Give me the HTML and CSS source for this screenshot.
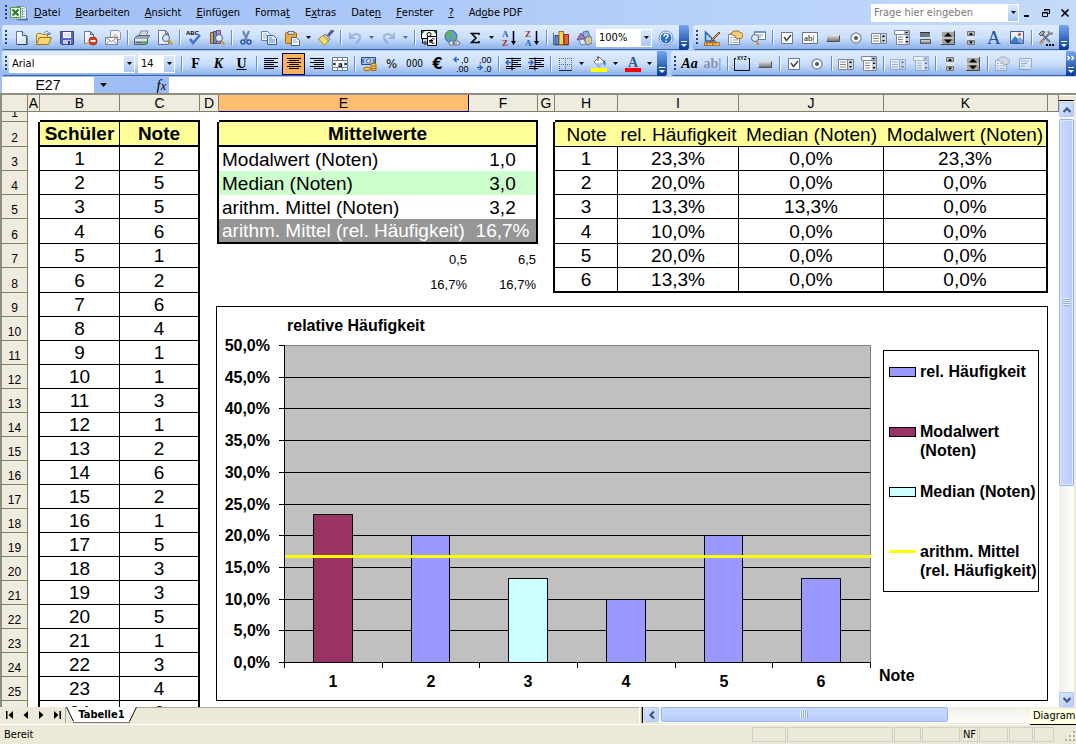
FILE: index.html
```html
<!DOCTYPE html>
<html lang="de">
<head>
<meta charset="utf-8">
<title>Tabelle1</title>
<link rel="stylesheet" href="styles.css">
</head>
<body>
<svg class="paints" aria-hidden="true">
<defs>
<linearGradient id="gbtn" x2="0" y2="1"><stop stop-color="#e8e8e8"/><stop offset="1" stop-color="#777"/></linearGradient>
<linearGradient id="gpage" x2="1" y2="1"><stop stop-color="#fff"/><stop offset="1" stop-color="#cfdcf2"/></linearGradient>
</defs>
</svg>
<svg class="sprite" aria-hidden="true">
<symbol id="caret" viewBox="0 0 5 3"><path d="M0 0h5L2.500 3z"/></symbol>
<symbol id="excel" viewBox="0 0 18 16"><path d="M6.500 1.500h8l2 2v11h-10z" fill="#fff" stroke="#6a8ab0"/><path d="M9 4h6M9 6.500h6M9 9h6M9 11.500h6M12.500 3v10" stroke="#86a5c8"/><path d="M.5 2.500h10v10H.5z" fill="#eef8e4" stroke="#5b9a3e"/><path d="M2.500 4.500l6 6M8.500 4.500l-6 6" stroke="#1f7a2e" stroke-width="2"/><path d="M8 13.500h10v2H8z" fill="#58789c"/></symbol>
<symbol id="new" viewBox="0 0 16 16"><path d="M3.500 1.500h6l4 4v9h-10z" fill="url(#gpage)" stroke="#5a76a8"/><path d="M9.500 1.500v4h4" fill="#dbe6f8" stroke="#3c5888"/><path d="M4 14.500h10V6" fill="none" stroke="#2d3f63"/></symbol>
<symbol id="open" viewBox="0 0 16 16"><path d="M.5 13.500v-9l1-1h4l1 1h5v3" fill="#f6dc8b" stroke="#a87e2a"/><path d="M.5 14.500l3-7h12l-3 7z" fill="#fbd56d" stroke="#a0721c"/><path d="M8 3c2-3 5-2 5 1m-2-1l2 2 2-2" fill="none" stroke="#4b79bd"/></symbol>
<symbol id="save" viewBox="0 0 16 16"><path d="M1.500 1.500h13v13h-12l-1-1z" fill="#5569c4" stroke="#39428f"/><path d="M4 2h8v6H4z" fill="#fff"/><path d="M5 4h6M5 6h6" stroke="#b9c5e6"/><path d="M4 10h8v4H4z" fill="#c7cbd8"/><path d="M9 11h2v3H9z" fill="#333f82"/></symbol>
<symbol id="perm" viewBox="0 0 16 16"><path d="M2.500 1.500h6l3 3v9h-9z" fill="url(#gpage)" stroke="#607aa8"/><path d="M8.500 1.500v3h3" fill="none" stroke="#435d8c"/><path d="M4 13h5" stroke="#e8b44a" stroke-width="2"/><circle cx="11" cy="11" r="4" fill="#d9401f" stroke="#a62d12"/><path d="M8.500 11h5" stroke="#fff" stroke-width="2"/></symbol>
<symbol id="mail" viewBox="0 0 16 16"><path d="M5.500.5h8l2 2v7h-10z" fill="#f7f9ff" stroke="#8b95ab"/><path d="M6 8l4-5 5 5" fill="#f4c2b0"/><path d="M.5 7.500h12v7H.5z" fill="#f6f7fa" stroke="#7a8296"/><path d="M.5 7.500l6 4 6-4M1 14.500l4-4m7 4l-4-4" fill="none" stroke="#8991a6"/></symbol>
<symbol id="print" viewBox="0 0 16 16"><path d="M5 6l2-5h7l-2 5z" fill="#fff" stroke="#6e7891"/><path d="M7 3h5M6 5h5" stroke="#9eb0d0"/><path d="M.5 8.500l3-3h12l-2 3v5l-2 1H.5z" fill="#9ea7b8" stroke="#525e76"/><path d="M1 9h12v2H1z" fill="#e3e7ef"/><path d="M9 11.500h4v2H9z" fill="#35c322"/><path d="M2 12.500h6" stroke="#56617b"/></symbol>
<symbol id="preview" viewBox="0 0 16 16"><path d="M1.500.5h7l3 3v11h-10z" fill="url(#gpage)" stroke="#5f7198"/><path d="M8.500.5v3h3" fill="none" stroke="#5f7198"/><circle cx="9" cy="8" r="3.500" fill="#cfe7f6" stroke="#55647f"/><path d="M11.500 10.500l3.500 4" stroke="#d79128" stroke-width="2.500"/></symbol>
<symbol id="spell" viewBox="0 0 16 16"><text x="0" y="5" class="t-abc">ABC</text><path d="M4 9l3 4 7-8" fill="none" stroke="#3f74c9" stroke-width="2.500"/></symbol>
<symbol id="research" viewBox="0 0 16 16"><path d="M1.500 2.500h3v11h-3z" fill="#d9a33c" stroke="#7c5b20"/><path d="M4.500 1.500h3v12h-3z" fill="#6689c9" stroke="#374c85"/><path d="M7.500.5h4v13h-4z" fill="#c287c7" stroke="#6c4c85"/><circle cx="10" cy="8" r="3.500" fill="#d9eefa" stroke="#506080"/><path d="M12.500 11l3 4" stroke="#d79128" stroke-width="2"/></symbol>
<symbol id="cut" viewBox="0 0 16 16"><path d="M5 1l4 9M11 1L7 10" stroke="#6c84ad" stroke-width="2"/><circle cx="5" cy="12" r="2" fill="none" stroke="#2c56a6" stroke-width="1.500"/><circle cx="11" cy="12" r="2" fill="none" stroke="#2c56a6" stroke-width="1.500"/></symbol>
<symbol id="copy" viewBox="0 0 16 16"><path d="M.5 1.500h6l3 3v6h-9z" fill="#fff" stroke="#5b7cb8"/><path d="M2 4h4M2 6h5M2 8h5" stroke="#89a9dc"/><path d="M6.500 5.500h6l3 3v6h-9z" fill="#eaf2ff" stroke="#335b9f"/><path d="M8 8h3M8 10h6M8 12h6" stroke="#5d87ca"/></symbol>
<symbol id="paste" viewBox="0 0 16 16"><rect x="1.500" y="2.500" width="11" height="11" rx="1" fill="#f2a93c" stroke="#9a6a20"/><path d="M4 1.500h6v3H4z" fill="#d9dce4" stroke="#6f727b"/><path d="M7.500 7.500h5l3 3v5h-8z" fill="#fff" stroke="#445c8d"/><path d="M9 10h3M9 12h5" stroke="#819dcc"/></symbol>
<symbol id="brush" viewBox="0 0 16 16"><path d="M15 0l-5 6" stroke="#675897" stroke-width="3"/><path d="M7 4l5 5-2 2-5-5z" fill="#c8c9d0" stroke="#70738a"/><path d="M5 5.500L.5 9l6 6.500 4-4.500z" fill="#f7dc71" stroke="#ab872c"/></symbol>
<symbol id="undo" viewBox="0 0 16 16"><path d="M3 3v5h5M3.500 7.500C8 2 14 4 13 8c-.5 3-3 4-4 5" fill="none" stroke="#6f8cc0" stroke-width="2"/></symbol>
<symbol id="redo" viewBox="0 0 16 16"><path d="M13 3v5H8M12.500 7.500C8 2 2 4 3 8c.5 3 3 4 4 5" fill="none" stroke="#6f8cc0" stroke-width="2"/></symbol>
<symbol id="euroconv" viewBox="0 0 16 16"><path d="M.5.5h15v8H.5z" fill="#fff" stroke="#000"/><path d="M1 1h3L1 4zM15 1v3l-3-3z" fill="#0a8a2e"/><circle cx="8" cy="4.500" r="2" fill="none" stroke="#000"/><path d="M6.500 6.500h9v9h-9z" fill="#fff" stroke="#000"/><path d="M13.500 9c-5-2-5 6 0 4M8 10.500h4M8 12h4" fill="none" stroke="#000"/><path d="M1.500 9v4h3m-1-2l2 2-2 2" fill="none" stroke="#000"/></symbol>
<symbol id="link" viewBox="0 0 16 16"><circle cx="7" cy="6.500" r="6" fill="#5e9be0" stroke="#3b659d"/><path d="M3 3c2-3 6-2 6 0s-3 1-3 4-3 1-4-1zM9 7c2-2 4-1 3 1s-2 3-3 2z" fill="#66b949"/><rect x="5" y="11" width="6" height="4" rx="2" fill="#e8edf6" stroke="#5f6a80"/><rect x="9.500" y="11" width="6" height="4" rx="2" fill="#e8edf6" stroke="#5f6a80"/><path d="M8 13h5" stroke="#5f6a80"/></symbol>
<symbol id="sum" viewBox="0 0 16 16"><path d="M12 5V3.500H4.500L9 8l-4.500 4.500H12V11" fill="none" stroke="#000" stroke-width="1.500"/></symbol>
<symbol id="sortaz" viewBox="0 0 16 16"><text x="1" y="7" class="t-sort blue">A</text><text x="1" y="16" class="t-sort red">Z</text><path d="M12.500 1v12" stroke="#000" stroke-width="1.500"/><path d="M10 11h5l-2.500 4z"/></symbol>
<symbol id="sortza" viewBox="0 0 16 16"><text x="1" y="7" class="t-sort red">Z</text><text x="1" y="16" class="t-sort blue">A</text><path d="M12.500 1v12" stroke="#000" stroke-width="1.500"/><path d="M10 11h5l-2.500 4z"/></symbol>
<symbol id="chart" viewBox="0 0 16 16"><path d="M.5 3v12h15" fill="none" stroke="#666"/><path d="M2 5.500h3.500v9H2z" fill="#5c8ee0" stroke="#27448e"/><path d="M6 1.500h4.500v13H6z" fill="#f8d45b" stroke="#9a6d14"/><path d="M11 4.500h4.500v10H11z" fill="#e5653b" stroke="#8e2d17"/></symbol>
<symbol id="draw" viewBox="0 0 16 16"><path d="M7 2l5-1 2 6-6 2z" fill="#8fb0ea" stroke="#4e6fb1"/><path d="M1 10l4-7 4 5z" fill="#ab7bc3" stroke="#6a4785"/><path d="M9 8l4-2 3 2v5l-4 2-3-2z" fill="#cfc6a2" stroke="#796f57"/><path d="M3 10l5-1 2 5-5 1z" fill="#dbe6fa" stroke="#6d81ab"/></symbol>
<symbol id="help" viewBox="0 0 16 16"><circle cx="8" cy="8" r="7" fill="#fff" stroke="#6b8fd0"/><circle cx="8" cy="8" r="5.500" fill="#2e6cd0"/><path d="M6 6.500c0-3 4-3 4-.5 0 1.500-2 1.500-2 3M8 10.500V12" fill="none" stroke="#fff" stroke-width="1.500"/></symbol>
<symbol id="design" viewBox="0 0 16 16"><path d="M1.500 2v9h9z" fill="#b9d3f5" stroke="#2b60b8" stroke-width="1.500"/><path d="M15 2l-8 8-1 2 2-1 8-8z" fill="#f3a245" stroke="#7b4d1d"/><path d="M.5 12.500h15v3H.5z" fill="#f6c45b" stroke="#a4732a"/><path d="M3 13v2M6 13v1M9 13v2M12 13v1" stroke="#7a5113"/></symbol>
<symbol id="props" viewBox="0 0 16 16"><path d="M1.500 4.500h11v10h-11z" fill="#fff" stroke="#77839e"/><path d="M3 7.500h2M6 7.500h5M3 10h2M6 10h5M3 12.500h2M6 12.500h5" stroke="#8d9ec1"/><path d="M3 4l4-3h4l5 3-1 4-5 1-2-3z" fill="#f5cf73" stroke="#9c762c"/></symbol>
<symbol id="code" viewBox="0 0 16 16"><path d="M4.500 1.500h11v8h-11z" fill="#fff" stroke="#6079a9"/><path d="M5 2h10" stroke="#6d94d8" stroke-width="2"/><path d="M7 5h6M7 7h4" stroke="#8294b6"/><circle cx="5" cy="8" r="3.500" fill="#d9edf9" stroke="#5d6b86"/><path d="M6.500 11l2 4" stroke="#c98f46" stroke-width="2"/></symbol>
<symbol id="check" viewBox="0 0 16 16"><path d="M2.500 2.500h11v11h-11z" fill="#fff" stroke="#6c788f"/><path d="M5 7l2.500 3.500L12 5" fill="none" stroke="#444" stroke-width="1.500"/></symbol>
<symbol id="textbox" viewBox="0 0 16 16"><path d="M.5 2.500h15v11H.5z" fill="#fff" stroke="#6c7484"/><text x="2" y="11" class="t-ab">ab|</text></symbol>
<symbol id="cmd" viewBox="0 0 16 16"><path d="M2 5h12v6H2z" fill="url(#gbtn)"/><path d="M1.500 11.500h13v-6" fill="none" stroke="#4b4f58"/></symbol>
<symbol id="radio" viewBox="0 0 16 16"><circle cx="8" cy="8" r="5" fill="#fff" stroke="#8a94a6" stroke-width="1.500"/><circle cx="8" cy="8" r="2" fill="#4c5568"/></symbol>
<symbol id="list" viewBox="0 0 16 16"><path d="M.5 3.500h15v10H.5z" fill="#fff" stroke="#7d8699"/><path d="M9.500 3.500v10" stroke="#7d8699"/><path d="M2 6h6M2 8.500h6M2 11h6" stroke="#888"/><path d="M10 4h5v9h-5z" fill="#c9d1de"/><path d="M11 7h3l-1.500-2zM11 10h3l-1.500 2z"/></symbol>
<symbol id="combo" viewBox="0 0 16 16"><path d="M.5.5h15v4H.5z" fill="#fff" stroke="#7d8699"/><path d="M10 1h5v3h-5z" fill="#aebedb"/><path d="M11 2h3l-1.500 1.500z"/><path d="M2.500 4.500h13v10h-13z" fill="#fff" stroke="#7d8699"/><path d="M4 7h5M4 9.500h5M4 12h5" stroke="#888"/><path d="M11 5h4v9h-4z" fill="#c9d1de"/><path d="M11.500 8h3L13 6zM11.500 11h3L13 13z"/></symbol>
<symbol id="toggle" viewBox="0 0 16 16"><path d="M3 2h10v5H3z" fill="#70757e"/><path d="M3 2.500h10" stroke="#33373e"/><path d="M3.500 9.500h10v4h-10z" fill="url(#gbtn)" stroke="#555"/></symbol>
<symbol id="spin" viewBox="0 0 16 16"><path d="M1 1h14v14H1z" fill="#a5a59f"/><path d="M1 1.500h14M1 8h14M1.500 1v14" stroke="#ddd"/><path d="M14.500 1v13.500H1" fill="none" stroke="#444"/><path d="M4 6.500h8L8 2.500zM4 9.500h8l-4 4z"/></symbol>
<symbol id="scroll" viewBox="0 0 16 16"><path d="M4 1h8v14H4z" fill="#dde3ed"/><path d="M4.500 1.500h7v4h-7zM4.500 10.500h7v4h-7z" fill="#b5b5b5" stroke="#777"/><path d="M6 5h4L8 2.500zM6 11.500h4L8 14z"/></symbol>
<symbol id="label" viewBox="0 0 16 16"><text x="1" y="14" class="t-A">A</text></symbol>
<symbol id="image" viewBox="0 0 16 16"><path d="M1.500 1.500h13v12h-13z" fill="#eaf3ff" stroke="#425b90"/><path d="M2 11l4-5 8 7H2z" fill="#4376c5"/><circle cx="10.500" cy="4.500" r="1.800" fill="#dd6240"/><path d="M8 10l3-3 3 3v3h-3z" fill="#7fa5e2"/></symbol>
<symbol id="tools" viewBox="0 0 16 16"><path d="M2 13L12 3M3 3l9 9" stroke="#6f7780" stroke-width="2"/><path d="M1 4l3-3 3 1-4 4z" fill="#a4abb5" stroke="#555"/><path d="M10 1l2 3 3-1" fill="none" stroke="#888" stroke-width="2"/><path d="M2 14l4-4" stroke="#c99f5c" stroke-width="2"/><path d="M8 14h2v2H8zM11 14h2v2h-2zM14 14h2v2h-2z"/></symbol>
<symbol id="left" viewBox="0 0 16 16"><path d="M1 2.500h14M1 4.500h10M1 6.500h14M1 8.500h10M1 10.500h14M1 12.500h10" stroke="#000"/></symbol>
<symbol id="center" viewBox="0 0 16 16"><path d="M1 2.500h14M3 4.500h10M1 6.500h14M3 8.500h10M1 10.500h14M3 12.500h10" stroke="#000"/></symbol>
<symbol id="right" viewBox="0 0 16 16"><path d="M1 2.500h14M5 4.500h10M1 6.500h14M5 8.500h10M1 10.500h14M5 12.500h10" stroke="#000"/></symbol>
<symbol id="merge" viewBox="0 0 16 16"><path d="M.5 1.500h15v13H.5zM.5 4.500h15M.5 11.500h15M5.500 1.500v3M10.500 1.500v3M5.500 11.500v3M10.500 11.500v3" fill="#fff" stroke="#6b7c9b"/><text x="6" y="11" class="t-ab bold">a</text><path d="M1 8h3M3 6.500L1.500 8 3 9.500M15 8h-3M13 6.500L14.500 8 13 9.500" fill="none" stroke="#000"/></symbol>
<symbol id="currency" viewBox="0 0 16 16"><path d="M.5 1.500h14v7H.5z" fill="#a9c3ec" stroke="#27509c"/><circle cx="7.500" cy="5" r="2" fill="#eef" stroke="#3a63b0"/><path d="M2 3v4M13 3v4" stroke="#3a63b0" stroke-width="1.500"/><path d="M10 7.500h5v7h-5z" fill="#f5c251" stroke="#a56d12"/><path d="M10 10h5M10 12.500h5" stroke="#a56d12"/><ellipse cx="6" cy="13" rx="3.500" ry="1.800" fill="#f5c251" stroke="#a56d12"/></symbol>
<symbol id="decin" viewBox="0 0 16 16"><text x="8" y="7" class="t-num">,0</text><text x="3" y="16" class="t-num">,00</text><path d="M6 3.500H1M3.500 1L1 3.500 3.500 6" fill="none" stroke="#2e65bd" stroke-width="1.500"/></symbol>
<symbol id="decout" viewBox="0 0 16 16"><text x="3" y="7" class="t-num">,00</text><text x="8" y="16" class="t-num">,0</text><path d="M1 11.500h5M3.500 9L6 11.500 3.500 14" fill="none" stroke="#2e65bd" stroke-width="1.500"/></symbol>
<symbol id="outdent" viewBox="0 0 16 16"><path d="M1 2.500h15M7 4.500h9M7 6.500h6M7 8.500h9M1 10.500h15M1 12.500h9M7 1.500v13" stroke="#000"/><path d="M6 6.500H1M3.500 4L1 6.500 3.500 9" fill="none" stroke="#2e65bd" stroke-width="1.500"/></symbol>
<symbol id="indent" viewBox="0 0 16 16"><path d="M1 2.500h15M7 4.500h9M7 6.500h6M7 8.500h9M1 10.500h15M1 12.500h9M7 1.500v13" stroke="#000"/><path d="M0 6.500h5M2.500 4L5 6.500 2.500 9" fill="none" stroke="#2e65bd" stroke-width="1.500"/></symbol>
<symbol id="borders" viewBox="0 0 16 16"><path d="M2.500 2v12M8.500 2v12M14.500 2v12M2 2.500h13M2 8.500h13" stroke="#556685" stroke-dasharray="1 1"/><path d="M2 14.500h13" stroke="#223"/></symbol>
<symbol id="fill" viewBox="0 0 16 16"><path d="M3 6l5-5 5 5-5 5z" fill="#fff" stroke="#596987"/><path d="M4 7h9l-5 4z" fill="#a8c4ec"/><path d="M7 0v5" stroke="#445"/><path d="M12 4c3 0 3 4 2 6-2-1-1-4-2-6z" fill="#3471c8"/><path d="M0 12h16v4H0z" fill="#ff0"/></symbol>
<symbol id="fontcol" viewBox="0 0 16 16"><text x="3" y="11" class="t-Ac">A</text><path d="M0 12h16v4H0z" fill="red"/></symbol>
<symbol id="group" viewBox="0 0 16 16"><text x="3" y="4" class="t-xyz">XYZ</text><path d="M2 2.500H.5v12h15v-12H14" fill="none" stroke="#111"/></symbol>
<symbol id="doc" viewBox="0 0 16 16"><path d="M2.500 2.500h12v9l-2 2h-10z" fill="#eef3fc" stroke="#5f739a"/><path d="M4 5h8M4 7.500h6M4 10h4" stroke="#6d80a6"/></symbol>
<symbol id="min" viewBox="0 0 10 10"><path d="M2 8h5" stroke="#000" stroke-width="2"/></symbol>
<symbol id="restore" viewBox="0 0 10 10"><path d="M3.500 3V1.500h5v4H7M1.500 4.500h5v4h-5zM3 2h6M1 5h6" fill="none" stroke="#000"/></symbol>
<symbol id="close" viewBox="0 0 10 10"><path d="M1.500 1.500l7 7M8.500 1.500l-7 7" stroke="#000" stroke-width="1.700"/></symbol>
<symbol id="cap" viewBox="0 0 10 25"><path d="M2 16.500h6" stroke="#fff"/><path d="M2 19h6l-3 3z" fill="#fff"/></symbol>
<symbol id="capmore" viewBox="0 0 10 25"><path d="M1.500 5l2 2-2 2M5.500 5l2 2-2 2" fill="none" stroke="#fff" stroke-width="1.500"/><path d="M2 16.500h6" stroke="#fff"/><path d="M2 19h6l-3 3z" fill="#fff"/></symbol>
<symbol id="first" viewBox="0 0 10 8"><path d="M1 0h1.500v8H1zM8 0v8L3.500 4z"/></symbol>
<symbol id="prev" viewBox="0 0 10 8"><path d="M7 0v8L2.500 4z"/></symbol>
<symbol id="next" viewBox="0 0 10 8"><path d="M3 0v8l4.500-4z"/></symbol>
<symbol id="last" viewBox="0 0 10 8"><path d="M7.500 0H9v8H7.500zM2 0v8l4.500-4z"/></symbol>
<symbol id="up" viewBox="0 0 10 10"><path d="M1.500 7L5 3.500 8.500 7" fill="none" stroke="#3f5784" stroke-width="2.200"/></symbol>
<symbol id="down" viewBox="0 0 10 10"><path d="M1.500 3L5 6.500 8.500 3" fill="none" stroke="#3f5784" stroke-width="2.200"/></symbol>
<symbol id="back" viewBox="0 0 10 10"><path d="M7 1.500L3.500 5 7 8.500" fill="none" stroke="#3f5784" stroke-width="2.200"/></symbol>
</svg>

<header class="menubar">
  <span class="grip"></span>
  <svg class="appicon"><use href="#excel"/></svg>
  <nav class="menus">
    <button><u>D</u>atei</button><button><u>B</u>earbeiten</button><button><u>A</u>nsicht</button><button><u>E</u>infügen</button><button>Forma<u>t</u></button><button>E<u>x</u>tras</button><button>Date<u>n</u></button><button><u>F</u>enster</button><button><u>?</u></button><button>Ad<u>o</u>be PDF</button>
  </nav>
  <div class="field ask"><input type="text" placeholder="Frage hier eingeben" aria-label="Frage"><span class="drop"><svg class="caret"><use href="#caret"/></svg></span></div>
  <div class="winbtns">
    <button aria-label="Minimieren"><svg><use href="#min"/></svg></button>
    <button aria-label="Wiederherstellen"><svg><use href="#restore"/></svg></button>
    <button aria-label="Schließen"><svg><use href="#close"/></svg></button>
  </div>
</header>

<div class="toolrow">
  <div class="toolbar">
    <span class="grip"></span>
    <button class="tb" aria-label="Neu"><svg><use href="#new"/></svg></button>
    <button class="tb" aria-label="Öffnen"><svg><use href="#open"/></svg></button>
    <button class="tb" aria-label="Speichern"><svg><use href="#save"/></svg></button>
    <button class="tb" aria-label="Berechtigung"><svg><use href="#perm"/></svg></button>
    <button class="tb" aria-label="E-Mail"><svg><use href="#mail"/></svg></button>
    <span class="sep"></span>
    <button class="tb" aria-label="Drucken"><svg><use href="#print"/></svg></button>
    <button class="tb" aria-label="Seitenansicht"><svg><use href="#preview"/></svg></button>
    <span class="sep"></span>
    <button class="tb" aria-label="Rechtschreibung"><svg><use href="#spell"/></svg></button>
    <button class="tb" aria-label="Recherchieren"><svg><use href="#research"/></svg></button>
    <span class="sep"></span>
    <button class="tb" aria-label="Ausschneiden"><svg><use href="#cut"/></svg></button>
    <button class="tb" aria-label="Kopieren"><svg><use href="#copy"/></svg></button>
    <button class="tb" aria-label="Einfügen"><svg><use href="#paste"/></svg></button>
    <button class="more" aria-label="Einfügeoptionen"><svg class="caret"><use href="#caret"/></svg></button>
    <button class="tb" aria-label="Format übertragen"><svg><use href="#brush"/></svg></button>
    <span class="sep"></span>
    <button class="tb dim" aria-label="Rückgängig"><svg><use href="#undo"/></svg></button>
    <button class="more dim" aria-label="Rückgängig-Liste"><svg class="caret"><use href="#caret"/></svg></button>
    <button class="tb dim" aria-label="Wiederholen"><svg><use href="#redo"/></svg></button>
    <button class="more dim" aria-label="Wiederholen-Liste"><svg class="caret"><use href="#caret"/></svg></button>
    <span class="sep"></span>
    <button class="tb" aria-label="Eurokonvertierung"><svg><use href="#euroconv"/></svg></button>
    <button class="tb" aria-label="Hyperlink"><svg><use href="#link"/></svg></button>
    <button class="tb" aria-label="AutoSumme"><svg><use href="#sum"/></svg></button>
    <button class="more" aria-label="Funktionen"><svg class="caret"><use href="#caret"/></svg></button>
    <button class="tb" aria-label="Aufsteigend sortieren"><svg><use href="#sortaz"/></svg></button>
    <button class="tb" aria-label="Absteigend sortieren"><svg><use href="#sortza"/></svg></button>
    <span class="sep"></span>
    <button class="tb" aria-label="Diagramm-Assistent"><svg><use href="#chart"/></svg></button>
    <button class="tb" aria-label="Zeichnen"><svg><use href="#draw"/></svg></button>
    <div class="field zoom"><select aria-label="Zoom"><option>100%</option></select><span class="drop"><svg class="caret"><use href="#caret"/></svg></span></div>
    <button class="tb" aria-label="Hilfe"><svg><use href="#help"/></svg></button>
    <button class="cap" aria-label="Optionen Standard"><svg><use href="#cap"/></svg></button>
  </div>
  <div class="toolbar">
    <span class="grip"></span>
    <button class="tb" aria-label="Entwurfsmodus"><svg><use href="#design"/></svg></button>
    <button class="tb" aria-label="Eigenschaften"><svg><use href="#props"/></svg></button>
    <button class="tb" aria-label="Code anzeigen"><svg><use href="#code"/></svg></button>
    <span class="sep"></span>
    <button class="tb" aria-label="Kontrollkästchen"><svg><use href="#check"/></svg></button>
    <button class="tb" aria-label="Textfeld"><svg><use href="#textbox"/></svg></button>
    <button class="tb" aria-label="Befehlsschaltfläche"><svg><use href="#cmd"/></svg></button>
    <button class="tb" aria-label="Optionsfeld"><svg><use href="#radio"/></svg></button>
    <button class="tb" aria-label="Listenfeld"><svg><use href="#list"/></svg></button>
    <button class="tb" aria-label="Kombinationsfeld"><svg><use href="#combo"/></svg></button>
    <button class="tb" aria-label="Umschaltfläche"><svg><use href="#toggle"/></svg></button>
    <button class="tb" aria-label="Drehfeld"><svg><use href="#spin"/></svg></button>
    <button class="tb" aria-label="Bildlaufleiste"><svg><use href="#scroll"/></svg></button>
    <button class="tb" aria-label="Bezeichnung"><svg><use href="#label"/></svg></button>
    <button class="tb" aria-label="Bild"><svg><use href="#image"/></svg></button>
    <span class="sep"></span>
    <button class="tb" aria-label="Weitere Steuerelemente"><svg><use href="#tools"/></svg></button>
    <button class="cap" aria-label="Optionen Steuerelemente"><svg><use href="#cap"/></svg></button>
  </div>
</div>

<div class="toolrow">
  <div class="toolbar">
    <span class="grip"></span>
    <div class="field font"><select aria-label="Schriftart"><option>Arial</option></select><span class="drop"><svg class="caret"><use href="#caret"/></svg></span></div>
    <div class="field size"><select aria-label="Schriftgrad"><option>14</option></select><span class="drop"><svg class="caret"><use href="#caret"/></svg></span></div>
    <span class="sep"></span>
    <button class="tb letter">F</button>
    <button class="tb letter"><i>K</i></button>
    <button class="tb letter"><u>U</u></button>
    <span class="sep"></span>
    <button class="tb" aria-label="Linksbündig"><svg><use href="#left"/></svg></button>
    <button class="tb on" aria-label="Zentriert"><svg><use href="#center"/></svg></button>
    <button class="tb" aria-label="Rechtsbündig"><svg><use href="#right"/></svg></button>
    <button class="tb" aria-label="Verbinden und zentrieren"><svg><use href="#merge"/></svg></button>
    <span class="sep"></span>
    <button class="tb" aria-label="Währung"><svg><use href="#currency"/></svg></button>
    <button class="tb glyph">%</button>
    <button class="tb glyph small">000</button>
    <button class="tb glyph bold">€</button>
    <button class="tb" aria-label="Dezimalstelle hinzufügen"><svg><use href="#decin"/></svg></button>
    <button class="tb" aria-label="Dezimalstelle löschen"><svg><use href="#decout"/></svg></button>
    <span class="sep"></span>
    <button class="tb" aria-label="Einzug verkleinern"><svg><use href="#outdent"/></svg></button>
    <button class="tb" aria-label="Einzug vergrößern"><svg><use href="#indent"/></svg></button>
    <span class="sep"></span>
    <button class="tb" aria-label="Rahmen"><svg><use href="#borders"/></svg></button>
    <button class="more" aria-label="Rahmenliste"><svg class="caret"><use href="#caret"/></svg></button>
    <button class="tb" aria-label="Füllfarbe"><svg><use href="#fill"/></svg></button>
    <button class="more" aria-label="Füllfarben"><svg class="caret"><use href="#caret"/></svg></button>
    <button class="tb" aria-label="Schriftfarbe"><svg><use href="#fontcol"/></svg></button>
    <button class="more" aria-label="Schriftfarben"><svg class="caret"><use href="#caret"/></svg></button>
    <button class="cap" aria-label="Optionen Format"><svg><use href="#cap"/></svg></button>
  </div>
  <div class="toolbar grow">
    <span class="grip"></span>
    <button class="tb letter"><i>Aa</i></button>
    <button class="tb letter pale">ab|</button>
    <span class="sep"></span>
    <button class="tb" aria-label="Gruppenfeld"><svg><use href="#group"/></svg></button>
    <button class="tb" aria-label="Schaltfläche"><svg><use href="#cmd"/></svg></button>
    <span class="sep"></span>
    <button class="tb" aria-label="Kästchen"><svg><use href="#check"/></svg></button>
    <button class="tb" aria-label="Option"><svg><use href="#radio"/></svg></button>
    <span class="sep"></span>
    <button class="tb" aria-label="Liste"><svg><use href="#list"/></svg></button>
    <button class="tb" aria-label="Kombination"><svg><use href="#combo"/></svg></button>
    <span class="sep"></span>
    <button class="tb dim" aria-label="Liste bearbeiten"><svg><use href="#list"/></svg></button>
    <button class="tb dim" aria-label="Kombination bearbeiten"><svg><use href="#combo"/></svg></button>
    <span class="sep"></span>
    <button class="tb" aria-label="Laufleiste"><svg><use href="#scroll"/></svg></button>
    <button class="tb" aria-label="Drehen"><svg><use href="#spin"/></svg></button>
    <span class="sep"></span>
    <button class="tb dim gray-icon" aria-label="Steuerelement-Eigenschaften"><svg><use href="#props"/></svg></button>
    <button class="tb dim" aria-label="Code bearbeiten"><svg><use href="#doc"/></svg></button>
    <button class="cap" aria-label="Optionen Formular"><svg><use href="#capmore"/></svg></button>
  </div>
</div>

<div class="formulabar">
  <input class="namebox" type="text" value="E27" aria-label="Namenfeld">
  <button class="namedrop" aria-label="Namen"><svg class="caret big"><use href="#caret"/></svg></button>
  <button class="fx"><i>f<small>x</small></i></button>
  <input class="formula" type="text" aria-label="Formel">
</div>

<main class="workarea">
  <div class="sheet">
    <table class="cells">
      <colgroup><col class="w-row"><col class="w-a"><col class="w-b"><col class="w-b"><col class="w-d"><col class="w-e"><col class="w-f"><col class="w-g"><col class="w-h"><col class="w-i"><col class="w-j"><col class="w-k"><col></colgroup>
      <thead><tr><th></th><th>A</th><th>B</th><th>C</th><th>D</th><th class="sel">E</th><th>F</th><th>G</th><th>H</th><th>I</th><th>J</th><th>K</th><th></th></tr></thead>
      <tbody>
      <tr class="r1"><th><span class="clip">1</span></th><td></td><td class="bb"></td><td class="bb"></td><td></td><td class="bb"></td><td class="bb"></td><td></td><td class="bb"></td><td class="bb"></td><td class="bb"></td><td class="bb"></td><td></td></tr>
      <tr class="tall"><th>2</th><td class="br"></td><td class="hd r bb">Schüler</td><td class="hd bb br">Note</td><td class="br"></td><td class="hd bb br" colspan="2">Mittelwerte</td><td class="br"></td><td class="hy b">Note</td><td class="hy b">rel. Häufigkeit</td><td class="hy b">Median (Noten)</td><td class="hy b br">Modalwert (Noten)</td><td></td></tr>
      <tr><th>3</th><td class="br"></td><td class="g">1</td><td class="g br">2</td><td class="br"></td><td class="lt">Modalwert (Noten)</td><td class="br">1,0</td><td class="br"></td><td class="g">1</td><td class="g">23,3%</td><td class="g">0,0%</td><td class="g br">23,3%</td><td></td></tr>
      <tr><th>4</th><td class="br"></td><td class="g">2</td><td class="g br">5</td><td class="br"></td><td class="lt green">Median (Noten)</td><td class="br green">3,0</td><td class="br"></td><td class="g">2</td><td class="g">20,0%</td><td class="g">0,0%</td><td class="g br">0,0%</td><td></td></tr>
      <tr><th>5</th><td class="br"></td><td class="g">3</td><td class="g br">5</td><td class="br"></td><td class="lt">arithm. Mittel (Noten)</td><td class="br">3,2</td><td class="br"></td><td class="g">3</td><td class="g">13,3%</td><td class="g">13,3%</td><td class="g br">0,0%</td><td></td></tr>
      <tr class="tall"><th>6</th><td class="br"></td><td class="g">4</td><td class="g br">6</td><td class="br"></td><td class="lt gray bb">arithm. Mittel (rel. Häufigkeit)</td><td class="br gray bb">16,7%</td><td class="br"></td><td class="g">4</td><td class="g">10,0%</td><td class="g">0,0%</td><td class="g br">0,0%</td><td></td></tr>
      <tr><th>7</th><td class="br"></td><td class="g">5</td><td class="g br">1</td><td></td><td class="sm">0,5</td><td class="sm">6,5</td><td class="br"></td><td class="g">5</td><td class="g">20,0%</td><td class="g">0,0%</td><td class="g br">0,0%</td><td></td></tr>
      <tr class="tall"><th>8</th><td class="br"></td><td class="g">6</td><td class="g br">2</td><td></td><td class="sm">16,7%</td><td class="sm">16,7%</td><td class="br"></td><td class="g bb">6</td><td class="g bb">13,3%</td><td class="g bb">0,0%</td><td class="g bb br">0,0%</td><td></td></tr>
      <tr><th>9</th><td class="br"></td><td class="g">7</td><td class="g br">6</td><td colspan="9"></td></tr>
      <tr><th>10</th><td class="br"></td><td class="g">8</td><td class="g br">4</td><td colspan="9"></td></tr>
      <tr><th>11</th><td class="br"></td><td class="g">9</td><td class="g br">1</td><td colspan="9"></td></tr>
      <tr><th>12</th><td class="br"></td><td class="g">10</td><td class="g br">1</td><td colspan="9"></td></tr>
      <tr><th>13</th><td class="br"></td><td class="g">11</td><td class="g br">3</td><td colspan="9"></td></tr>
      <tr><th>14</th><td class="br"></td><td class="g">12</td><td class="g br">1</td><td colspan="9"></td></tr>
      <tr><th>15</th><td class="br"></td><td class="g">13</td><td class="g br">2</td><td colspan="9"></td></tr>
      <tr><th>16</th><td class="br"></td><td class="g">14</td><td class="g br">6</td><td colspan="9"></td></tr>
      <tr><th>17</th><td class="br"></td><td class="g">15</td><td class="g br">2</td><td colspan="9"></td></tr>
      <tr><th>18</th><td class="br"></td><td class="g">16</td><td class="g br">1</td><td colspan="9"></td></tr>
      <tr><th>19</th><td class="br"></td><td class="g">17</td><td class="g br">5</td><td colspan="9"></td></tr>
      <tr><th>20</th><td class="br"></td><td class="g">18</td><td class="g br">3</td><td colspan="9"></td></tr>
      <tr><th>21</th><td class="br"></td><td class="g">19</td><td class="g br">3</td><td colspan="9"></td></tr>
      <tr><th>22</th><td class="br"></td><td class="g">20</td><td class="g br">5</td><td colspan="9"></td></tr>
      <tr><th>23</th><td class="br"></td><td class="g">21</td><td class="g br">1</td><td colspan="9"></td></tr>
      <tr><th>24</th><td class="br"></td><td class="g">22</td><td class="g br">3</td><td colspan="9"></td></tr>
      <tr><th>25</th><td class="br"></td><td class="g">23</td><td class="g br">4</td><td colspan="9"></td></tr>
      <tr><th></th><td class="br"></td><td class="g">24</td><td class="g br">6</td><td colspan="9"></td></tr>
      </tbody>
    </table>

    <section class="chart" aria-label="Diagramm">
      <svg class="plot" viewBox="0 0 666 393">
        <path d="M68 39h586v316H68z" fill="#c0c0c0"/>
        <path d="M68 38.500h585.500v317" fill="none" stroke="#808080"/>
        <path d="M62 70.500h591M62 101.500h591M62 133.500h591M62 165.500h591M62 197.500h591M62 228.500h591M62 260.500h591M62 292.500h591M62 323.500h591M62 38.500h6M62 355.500h592" stroke="#000"/>
        <g stroke="#000" fill="#9999ff">
          <path d="M96.500 207.500h39v148h-39z" fill="#993366"/>
          <path d="M194.500 228.500h38v127h-38z"/>
          <path d="M291.500 271.500h39v84h-39z" fill="#ccffff"/>
          <path d="M389.500 292.500h39v63h-39z"/>
          <path d="M487.500 228.500h38v127h-38z"/>
          <path d="M584.500 271.500h39v84h-39z"/>
        </g>
        <path d="M67.500 38v323M165.500 356v5M262.500 356v5M360.500 356v5M458.500 356v5M555.500 356v5M653.500 356v5" stroke="#000"/>
        <path d="M68 249.500h586" stroke="#ff0" stroke-width="3"/>
        <g text-anchor="end">
          <text x="53" y="44">50,0%</text><text x="53" y="76">45,0%</text><text x="53" y="107">40,0%</text><text x="53" y="139">35,0%</text><text x="53" y="171">30,0%</text><text x="53" y="203">25,0%</text><text x="53" y="234">20,0%</text><text x="53" y="266">15,0%</text><text x="53" y="298">10,0%</text><text x="53" y="329">5,0%</text><text x="53" y="361">0,0%</text>
        </g>
        <g text-anchor="middle">
          <text x="116" y="380">1</text><text x="214" y="380">2</text><text x="311" y="380">3</text><text x="409" y="380">4</text><text x="507" y="380">5</text><text x="604" y="380">6</text>
        </g>
        <text x="70" y="24">relative Häufigkeit</text>
        <text x="662" y="374">Note</text>
      </svg>
      <ul class="legend">
        <li><span class="key k1"></span>rel. Häufigkeit</li>
        <li><span class="key k2"></span>Modalwert<br>(Noten)</li>
        <li><span class="key k3"></span>Median (Noten)</li>
        <li><span class="key line"></span>arithm. Mittel<br>(rel. Häufigkeit)</li>
      </ul>
    </section>
  </div>
  <div class="vscroll">
    <span class="splitter"></span>
    <button aria-label="Nach oben"><svg><use href="#up"/></svg></button>
    <div class="vtrack"><div class="vthumb"><span class="ridges"></span></div></div>
    <button aria-label="Nach unten"><svg><use href="#down"/></svg></button>
  </div>
</main>

<div class="tabbar">
  <div class="tabnav">
    <button aria-label="Erstes Blatt"><svg><use href="#first"/></svg></button><button aria-label="Voriges Blatt"><svg><use href="#prev"/></svg></button><button aria-label="Nächstes Blatt"><svg><use href="#next"/></svg></button><button aria-label="Letztes Blatt"><svg><use href="#last"/></svg></button>
  </div>
  <button class="tab">
    <svg class="tabshape" viewBox="0 0 71 16"><path d="M0 0l7 15h57l7-15z" fill="#fff"/><path d="M.5 0l7 14.500M63.500 14.500l7-14.500" fill="none" stroke="#000"/><path d="M7 15.500h57" stroke="#777"/></svg>
    <span class="tabname">Tabelle1</span>
  </button>
  <span class="tabspace"></span>
  <span class="tabsplit"></span>
  <div class="hscroll">
    <button aria-label="Nach links"><svg><use href="#back"/></svg></button>
    <div class="htrack"><div class="hthumb"><span class="ridges"></span></div></div>
  </div>
  <div class="tooltip" role="tooltip">Diagramm</div>
</div>

<footer class="status">
  <span class="ready">Bereit</span>
  <span class="pane p34"></span><span class="pane p106"></span><span class="pane p27"></span><span class="pane p38"></span><span class="pane p17">NF</span><span class="pane p29"></span><span class="pane p24"></span><span class="pane p20"></span>
  <svg class="sizer" viewBox="0 0 10 12"><path d="M8 1h2v2H8zM4 5h2v2H4zM8 5h2v2H8zM0 9h2v2H0zM4 9h2v2H4zM8 9h2v2H8z" fill="#b5b19f"/></svg>
</footer>
</body>
</html>
```

FILE: styles.css
```css
* { box-sizing: border-box; }
body {
  margin: 0; height: 100vh; overflow: hidden;
  display: flex; flex-direction: column;
  font: 11px/14px "DejaVu Sans Condensed", "Open Sans", sans-serif;
  color: #000; background: #ece9d8;
}
button { border: 0; padding: 0; margin: 0; background: none; font: inherit; color: inherit; display: flex; align-items: center; justify-content: center; }
input, select { border: 0; padding: 0; margin: 0; font: inherit; color: inherit; background: #fff; min-width: 0; outline: 0; border-radius: 0; }
select { appearance: none; }
u { text-underline-offset: 1px; }
.sprite { display: none; }
.paints { position: absolute; width: 0; height: 0; }
.caret { width: 5px; height: 3px; }
.caret.big { width: 7px; height: 4px; }

.menubar { display: flex; align-items: center; height: 25px; flex: none; padding: 0 6px 0 4px; background: linear-gradient(90deg, #9ebef5, #c4dafa); }
.appicon { width: 18px; height: 16px; margin: 0 6px 0 1px; }
.menus { display: flex; gap: 15px; flex: 1; }
.field { display: flex; background: #fff; height: 18px; }
.field input, .field select { flex: 1; padding-left: 3px; }
.drop { width: 10px; margin: 1px; display: flex; align-items: center; justify-content: center; background: linear-gradient(#dbe8fd, #a9c8f5); }
.ask { width: 148px; }
.ask input::placeholder { color: #7b7b7b; opacity: 1; }
.winbtns { display: flex; gap: 9px; margin-left: 3px; }
.winbtns svg { width: 10px; height: 10px; }

.toolrow { display: flex; gap: 4px; height: 26px; flex: none; padding: 0 0 1px 2px; background: linear-gradient(90deg, #9ebef5, #c4dafa); }
.toolbar { display: flex; align-items: center; padding-left: 2px; border-radius: 3px; background: linear-gradient(#dfecff, #cbdffb 50%, #8fb3ec 95%, #3b619c 96%); }
.toolbar.grow { flex: 1; border-radius: 3px 0 0 3px; }
.grip { width: 2px; height: 15px; margin: 0 2px 0 1px; background: repeating-linear-gradient(#274176 0 2px, transparent 2px 4px); }
.sep { width: 1px; height: 15px; margin: 0 2px 0 3px; background: #6a8ccb; box-shadow: 1px 0 #f1f9ff; }
.tb { width: 23px; height: 23px; flex: none; }
.tb svg { width: 16px; height: 16px; }
.more { width: 11px; height: 23px; }
.dim { opacity: .5; }
.gray-icon { filter: grayscale(1); }
.on { background: #ffb05c; border: 1px solid #000080; height: 22px; }
.letter { font: bold 14px/16px "Liberation Serif", serif; }
.pale { color: #8193b3; }
.glyph { font-size: 13px; }
.glyph.small { font-size: 10px; }
.glyph.bold { font-size: 16px; font-weight: bold; }
.zoom { width: 56px; margin: 0 2px 0 1px; }
.font { width: 126px; }
.size { width: 37px; margin: 0 3px; }
.cap { width: 10px; height: 25px; margin-left: 2px; border-radius: 0 3px 3px 0; background: linear-gradient(#75a6f1, #053995); }
.grow .cap { margin-left: auto; }
.cap svg { width: 10px; height: 25px; }
.t-abc { font: bold 6px "Liberation Sans", sans-serif; }
.t-sort { font: bold 9px "Liberation Serif", serif; }
.t-sort.blue { fill: #2c5cb5; }
.t-sort.red { fill: #a5332c; }
.t-ab { font: 9px "Liberation Serif", serif; }
.t-ab.bold { font-weight: bold; }
.t-A { font: 19px "Liberation Serif", serif; fill: #25519d; }
.t-Ac { font: bold 14px "Liberation Serif", serif; fill: #36599a; }
.t-num { font: 9px "Liberation Sans", sans-serif; }
.t-xyz { font: bold 5px "Liberation Sans", sans-serif; }

.formulabar { display: flex; height: 16px; flex: none; padding-left: 2px; background: #9ebef5; font: 14px/16px "Liberation Sans", sans-serif; }
.namebox { width: 92px; text-align: center; }
.namedrop { width: 18px; }
.fx { width: 57px; justify-content: flex-end; padding-right: 3px; font: 15px/16px "Liberation Serif", serif; }
.fx small { font-size: 12px; }
.formula { flex: 1; }

.workarea { flex: 1; min-height: 0; display: flex; background: #fff; border-top: 2px solid #8f8d80; border-left: 2px solid #8f8d80; }
.sheet { position: relative; flex: 1; min-width: 0; overflow: hidden; font-family: "Liberation Sans", sans-serif; }
.cells { width: 100%; table-layout: fixed; border-spacing: 0; font-size: 19px; line-height: 22px; }
.cells th, .cells td { padding: 0; height: 24px; text-align: center; vertical-align: bottom; white-space: nowrap; }
.cells th { background: #efebde; font-weight: normal; font-size: 12px; line-height: 16px; border: 0 solid #808069; border-width: 0 1px 1px 0; }
.cells thead th { height: 17px; font-size: 14px; }
.cells thead th.sel { background: #ffbd6f; border-color: #000080; }
.cells .r1 th, .cells .r1 td { height: 10px; }
.cells .clip { display: flex; align-items: flex-end; justify-content: center; height: 9px; overflow: hidden; }
.cells .tall th, .cells .tall td { height: 25px; }
.w-row { width: 26px; } .w-a { width: 12px; } .w-b { width: 80px; } .w-d { width: 19px; }
.w-e { width: 250px; } .w-f { width: 69px; } .w-g { width: 17px; } .w-h { width: 63px; }
.w-i { width: 121px; } .w-j { width: 145px; } .w-k { width: 164px; }
.cells .g { border: solid #000; border-width: 0 1px 1px 0; }
.cells .hd { background: #ffff99; font-weight: bold; }
.cells .r { border-right: 1px solid #000; }
.cells .hy { background: #ffff99; }
.cells .b { border-bottom: 1px solid #000; }
.cells .bb { border-bottom: 2px solid #000; }
.cells .br { border-right: 2px solid #000; }
.cells .lt { text-align: left; padding-left: 3px; }
.cells .green { background: #ccffcc; }
.cells .gray { background: #969696; color: #fff; }
.cells .sm { font-size: 13px; line-height: 16px; text-align: right; padding-right: 2px; }

.chart { position: absolute; left: 214px; top: 211px; width: 832px; height: 395px; display: flex; align-items: flex-start; background: #fff; border: 1px solid #000; font: bold 16px/19px "Liberation Sans", sans-serif; }
.plot { width: 666px; height: 393px; flex: none; overflow: visible; }
.legend { margin: 43px 0 0; padding: 0; width: 156px; list-style: none; border: 1px solid #000; display: grid; grid-auto-rows: 60px; }
.legend li { display: flex; align-items: flex-start; gap: 4px; padding: 11px 0 0 5px; white-space: nowrap; }
.key { flex: none; width: 27px; height: 10px; margin-top: 5px; border: 1px solid #000; }
.k1 { background: #9999ff; }
.k2 { background: #993366; }
.k3 { background: #ccffff; }
.key.line { height: 3px; margin-top: 8px; border: 0; background: #ff0; }

.vscroll { width: 17px; padding-right: 2px; flex: none; display: flex; flex-direction: column; background: #ece9d8; }
.splitter { height: 6px; background: #ece9d8; border-top: 1px solid #fff; border-bottom: 1px solid #000; margin-bottom: 1px; }
.vscroll button, .hscroll button { width: 15px; height: 15px; flex: none; border-radius: 2px; border: 1px solid #b4c8f6; background: linear-gradient(135deg, #dbe6fe, #b5ccfb); }
.vscroll svg, .hscroll svg { width: 10px; height: 10px; }
.vtrack { flex: 1; padding-top: 2px; background: linear-gradient(90deg, #f0eee6, #fefefb); }
.vthumb { height: 64%; display: flex; align-items: center; justify-content: center; border: 1px solid #98b5ec; border-radius: 2px; background: linear-gradient(90deg, #cbdafd, #b6cdfb); box-shadow: inset 0 0 0 1px #dce8ff; }
.ridges { width: 7px; height: 8px; background: repeating-linear-gradient(#f1f6ff 0 1px, #8caae4 1px 2px); }

.tabbar { position: relative; display: flex; height: 18px; flex: none; padding-left: 2px; border-bottom: 1px solid #fff; }
.tabnav { display: flex; width: 64px; height: 16px; border-right: 1px solid #aca899; }
.tabnav button { width: 16px; }
.tabnav svg { width: 10px; height: 8px; }
.tab { display: grid; width: 71px; height: 16px; }
.tabshape, .tabname { grid-area: 1 / 1; }
.tabshape { width: 71px; height: 16px; }
.tabname { font-weight: bold; z-index: 1; }
.tabspace { flex: 1; border-top: 1px solid #aca899; }
.tabsplit { width: 3px; height: 16px; border-left: 1px solid #fff; border-right: 1px solid #aca899; }
.hscroll { display: flex; width: 434px; height: 16px; padding: 0 17px 0 1px; border-left: 1px solid #000; }
.htrack { flex: 1; padding: 0 0 0 2px; background: linear-gradient(#f0eee6, #fefefb); }
.hthumb { width: 72%; height: 15px; display: flex; align-items: center; justify-content: center; border: 1px solid #98b5ec; border-radius: 2px; background: linear-gradient(#cbdafd, #b6cdfb); }
.hthumb .ridges { width: 8px; height: 7px; background: repeating-linear-gradient(90deg, #f1f6ff 0 1px, #8caae4 1px 2px); }
.tooltip { position: absolute; right: 0; top: 2px; width: 46px; height: 16px; padding-left: 3px; overflow: hidden; background: #ffffe1; border-bottom: 1px solid #000; z-index: 2; }

.status { display: flex; align-items: center; gap: 1px; height: 19px; flex: none; padding-left: 4px; }
.ready { flex: 1; }
.pane { height: 15px; border: 1px solid #d0cfc8; text-align: center; }
.p34 { width: 34px; } .p106 { width: 106px; } .p27 { width: 27px; } .p38 { width: 38px; }
.p17 { width: 17px; } .p29 { width: 29px; } .p24 { width: 24px; } .p20 { width: 20px; }
.sizer { width: 10px; height: 12px; margin: 3px 1px 0 10px; }
```
